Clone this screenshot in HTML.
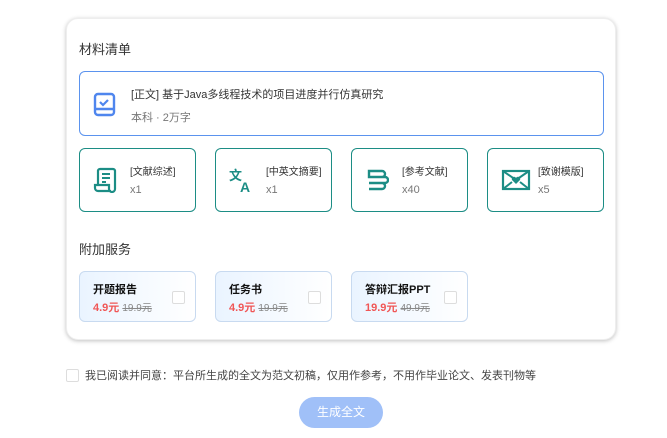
<!DOCTYPE html>
<html><head><meta charset="utf-8"><style>
*{margin:0;padding:0;box-sizing:border-box}
body{width:667px;height:438px;background:#fff;font-family:"Liberation Sans","Noto Sans CJK SC",sans-serif;position:relative;overflow:hidden;color:#333}
.card{position:absolute;left:66px;top:18px;width:550px;height:322px;border-radius:12px;background:#fff;box-shadow:0 1px 4px rgba(0,0,0,.25);border:1px solid #eee}
.abs{position:absolute}
.h{font-size:13px;color:#333}
.main{left:79px;top:71px;width:525px;height:65px;border:1px solid #5b93ee;border-radius:6px}
.sm{top:148px;width:117px;height:64px;border:1px solid #1c8d85;border-radius:6px}
.sm .t{position:absolute;left:50px;top:14px;font-size:10px;color:#333}
.sm .n{position:absolute;left:50px;top:35px;font-size:11px;color:#777}
.sm svg{position:absolute;left:13px;top:18px}
.sv{top:271px;width:117px;height:51px;border:1px solid #c8daf0;border-radius:6px;background:linear-gradient(90deg,#eaf4ff,#fff)}
.sv .t{position:absolute;left:13px;top:9px;font-size:11px;font-weight:bold;color:#111}
.sv .p{position:absolute;left:13px;top:27px;font-size:11px;font-weight:bold;color:#f05656}
.sv .p s{color:#888;font-weight:normal;font-size:10px}
.sv .c{position:absolute;left:92px;top:19px;width:13px;height:13px;border:1px solid #ddd;border-radius:2px;background:#fff}
</style></head><body>
<div class="card"></div>
<div class="abs h" style="left:79px;top:39px">材料清单</div>
<div class="abs main">
<svg class="abs" style="left:13px;top:20px" width="24" height="26" viewBox="0 0 24 26"><rect x="2" y="2" width="19" height="21" rx="3" fill="none" stroke="#4f86ee" stroke-width="2.4"/><path d="M2 17h19" stroke="#4f86ee" stroke-width="2.4"/><path d="M7 10l3 3 5-5" fill="none" stroke="#4f86ee" stroke-width="2.2"/></svg>
<div class="abs" style="left:51px;top:14px;font-size:11px;color:#333">[正文] 基于Java多线程技术的项目进度并行仿真研究</div>
<div class="abs" style="left:51px;top:37px;font-size:11px;color:#777">本科 · 2万字</div>
</div>
<div class="abs sm" style="left:79px"><svg width="24" height="26" viewBox="0 0 24 26"><path d="M5 18V4a2 2 0 012-2h13a2 2 0 012 2v18a3 3 0 01-6 0v-4H2v3a3 3 0 003 3h13" fill="none" stroke="#1c8d85" stroke-width="2.2"/><path d="M9 7h8M9 11h8M9 15h4" stroke="#1c8d85" stroke-width="2"/></svg><div class="t">[文献综述]</div><div class="n">x1</div></div>
<div class="abs sm" style="left:215px"><svg width="26" height="26" viewBox="0 0 26 26"><text x="0" y="13" font-size="13" font-weight="bold" fill="#1c8d85" font-family="Liberation Sans,Noto Sans CJK SC,sans-serif">文</text><text x="11" y="25" font-size="14" font-weight="bold" fill="#1c8d85" font-family="Liberation Sans,sans-serif">A</text></svg><div class="t">[中英文摘要]</div><div class="n">x1</div></div>
<div class="abs sm" style="left:351px"><svg width="24" height="26" viewBox="0 0 24 26"><path d="M4 4h13a3 3 0 010 6H4zM4 10h16a3 3 0 010 6H4M4 16h13a3 3 0 010 6H4" fill="none" stroke="#1c8d85" stroke-width="2.4"/></svg><div class="t">[参考文献]</div><div class="n">x40</div></div>
<div class="abs sm" style="left:487px"><svg width="30" height="26" viewBox="0 0 30 26"><rect x="2" y="4" width="26" height="18" fill="none" stroke="#1c8d85" stroke-width="2.2"/><path d="M2 4l13 9 13-9M2 22l9-7M28 22l-9-7" fill="none" stroke="#1c8d85" stroke-width="2"/><path d="M15 17l-4-4a2.2 2.2 0 014-2 2.2 2.2 0 014 2z" fill="#1c8d85"/></svg><div class="t">[致谢模版]</div><div class="n">x5</div></div>
<div class="abs h" style="left:79px;top:239px">附加服务</div>
<div class="abs sv" style="left:79px"><div class="t">开题报告</div><div class="p">4.9元 <s>19.9元</s></div><div class="c"></div></div>
<div class="abs sv" style="left:215px"><div class="t">任务书</div><div class="p">4.9元 <s>19.9元</s></div><div class="c"></div></div>
<div class="abs sv" style="left:351px"><div class="t">答辩汇报PPT</div><div class="p">19.9元 <s>49.9元</s></div><div class="c"></div></div>
<div class="abs" style="left:66px;top:369px;width:13px;height:13px;border:1px solid #ddd;border-radius:2px"></div>
<div class="abs" style="left:85px;top:367px;font-size:11px;color:#444;white-space:nowrap">我已阅读并同意：平台所生成的全文为范文初稿，仅用作参考，不用作毕业论文、发表刊物等</div>
<div class="abs" style="left:299px;top:397px;width:84px;height:31px;border-radius:16px;background:#a0c0f8;color:#fff;font-size:12px;text-align:center;line-height:31px">生成全文</div>
</body></html>
